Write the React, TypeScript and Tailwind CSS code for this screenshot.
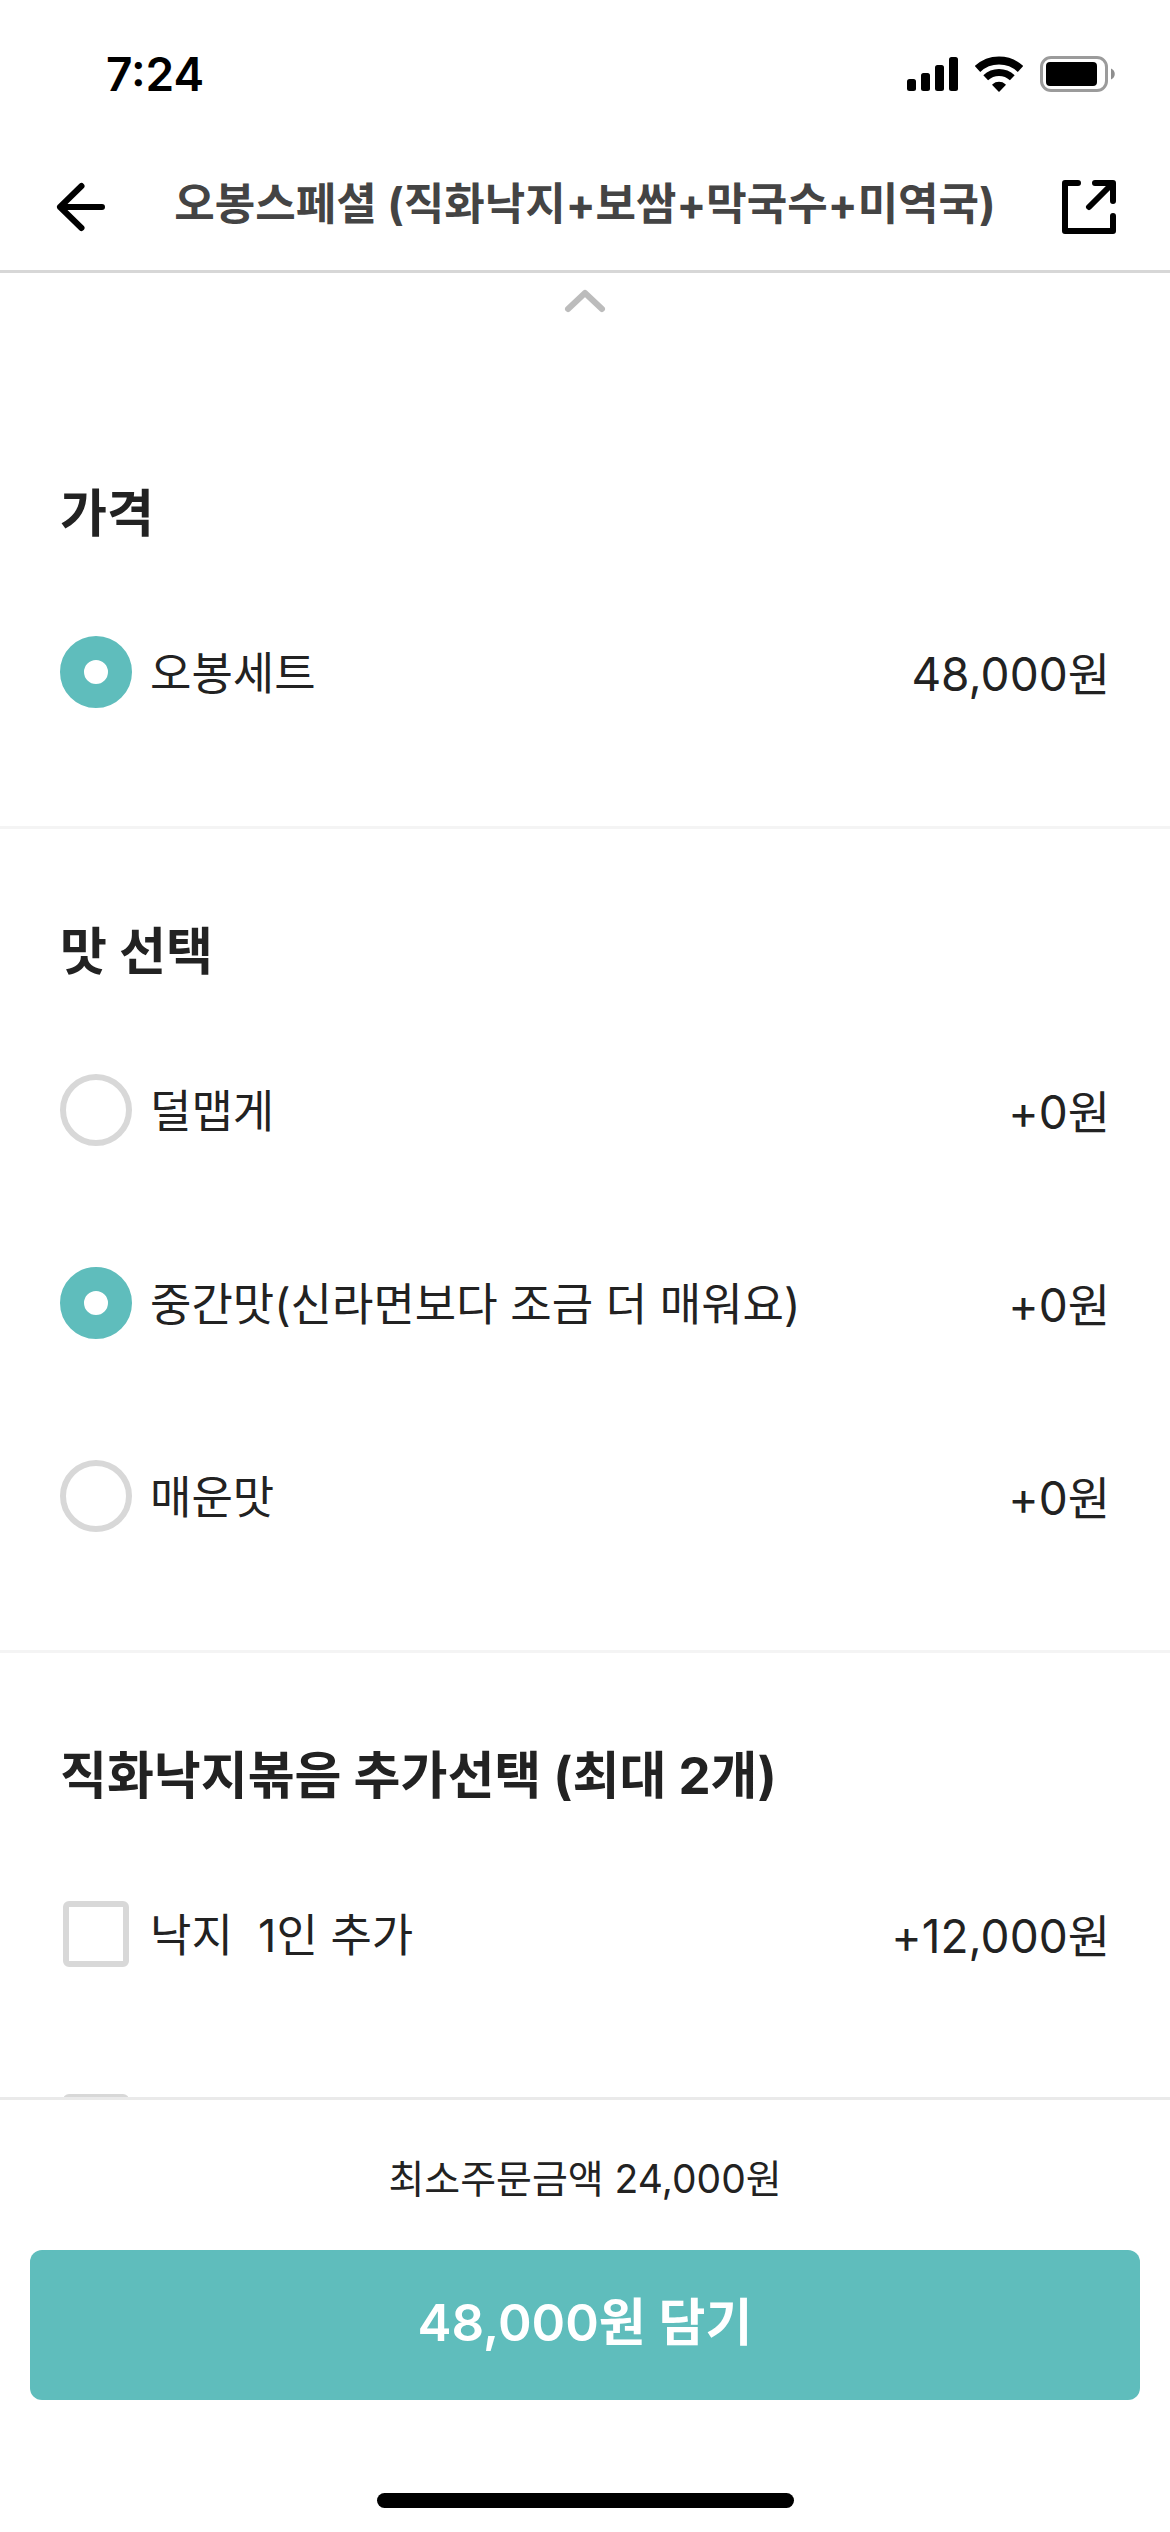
import { useState } from "react";

type Option = {
  id: string;
  name?: string;
  price?: string;
};

const tastes: Option[] = [
  { id: "mild", name: "덜맵게", price: "+0원" },
  { id: "medium", name: "중간맛(신라면보다 조금 더 매워요)", price: "+0원" },
  { id: "hot", name: "매운맛", price: "+0원" },
];

const extras: Option[] = [
  { id: "octopus-1", name: "낙지  1인 추가", price: "+12,000원" },
  { id: "octopus-2" },
];

const StatusBar = () => (
  <div className="flex h-[144px] shrink-0 items-center justify-between pt-1 pr-[54px] pl-[106px] text-black">
    <span className="text-[46px] leading-[60px] font-semibold">7:24</span>
    <div className="flex items-center gap-[17px]">
      <svg width="51" height="36" viewBox="0 0 51 36" fill="currentColor">
        <rect x="0" y="23" width="9" height="12" rx="2.5" />
        <rect x="14" y="17" width="9" height="18" rx="2.5" />
        <rect x="28" y="9" width="9" height="26" rx="2.5" />
        <rect x="42" y="1" width="9" height="34" rx="2.5" />
      </svg>
      <svg width="48" height="36" viewBox="0 0 48 36" fill="none" stroke="currentColor">
        <path d="M2.5 13A31.5 31.5 0 0 1 45.5 13" strokeWidth="8" />
        <path d="M10.7 21.7A19.5 19.5 0 0 1 37.3 21.7" strokeWidth="7" />
        <path d="M24 35L18 28.7A9 9 0 0 1 30 28.7Z" fill="currentColor" strokeWidth="1.5" strokeLinejoin="round" />
      </svg>
      <svg width="76" height="36" viewBox="0 0 76 36">
        <rect x="1.5" y="1.5" width="65" height="33" rx="9.5" fill="none" stroke="#9b9b9b" strokeWidth="3" />
        <rect x="6" y="6" width="51" height="24" rx="4" fill="#000" />
        <path d="M71 12.5C76 14.5 76 21.5 71 23.5Z" fill="#8e8e8e" />
      </svg>
    </div>
  </div>
);

const Header = () => (
  <header className="flex h-[129px] shrink-0 items-center justify-between border-b-[3px] border-[#d7d7d7] px-[54px]">
    <button type="button" aria-label="뒤로" className="text-black">
      <svg width="54" height="54" viewBox="0 0 54 54" fill="none" stroke="currentColor" strokeWidth="6" strokeLinecap="round" strokeLinejoin="round">
        <path d="M48 27H6M27.5 6L6 27L27.5 48" />
      </svg>
    </button>
    <h1 className="pb-[6px] text-[44px] leading-[60px] font-bold text-[#444444]">오봉스페셜 (직화낙지+보쌈+막국수+미역국)</h1>
    <button type="button" aria-label="공유" className="text-black">
      <svg width="54" height="54" viewBox="0 0 54 54" fill="none" stroke="currentColor" strokeWidth="6" strokeLinecap="round" strokeLinejoin="round">
        <path d="M16 3H3V51H51V36" />
        <path d="M33 3H51V21M50 4L27 27" />
      </svg>
    </button>
  </header>
);

const OptionRow = ({
  type,
  group,
  option,
  checked,
  onChange,
}: {
  type: "radio" | "checkbox";
  group: string;
  option: Option;
  checked: boolean;
  onChange: () => void;
}) => (
  <div className="flex h-[72px] items-center gap-[18px] leading-[60px]">
    <input
      id={option.id}
      type={type}
      name={group}
      checked={checked}
      onChange={onChange}
      aria-label={option.name ? undefined : "추가 옵션"}
      className={
        type === "radio"
          ? "size-[72px] shrink-0 appearance-none rounded-full border-[6px] border-[#d8d8d8] bg-white checked:border-[24px] checked:border-[#5fbdbc]"
          : "m-[3px] size-[66px] shrink-0 appearance-none rounded-md border-[6px] border-[#d8d8d8] bg-white checked:border-[#5fbdbc] checked:bg-[#5fbdbc]"
      }
    />
    {option.name && (
      <label htmlFor={option.id} className="flex flex-1 justify-between pt-1 whitespace-pre">
        <span className="text-[45px]">{option.name}</span>
        <span className="text-[46px]">{option.price}</span>
      </label>
    )}
  </div>
);

const Section = ({ title, children }: { title: string; children: React.ReactNode }) => (
  <section className="border-b-[3px] border-[#f4f4f4] px-[60px] pt-[87px] pb-[118px]">
    <h2 className="mb-[86px] text-[51px] leading-[72px] font-bold">{title}</h2>
    <div className="flex flex-col gap-[121px]">{children}</div>
  </section>
);

export default function App() {
  const [taste, setTaste] = useState("medium");
  const [picked, setPicked] = useState<string[]>([]);

  const toggle = (id: string) =>
    setPicked(picked.includes(id) ? picked.filter((p) => p !== id) : [...picked, id]);

  return (
    <div className="flex h-screen flex-col bg-white font-['Inter','Noto_Sans_CJK_KR',sans-serif] text-[#222222]">
      <StatusBar />
      <Header />

      <main className="min-h-0 flex-1 overflow-y-auto [scrollbar-width:none]">
        <div className="flex h-[118px] justify-center pt-4">
          <svg width="42" height="24" viewBox="0 0 42 24" fill="none" stroke="#bcbcbc" strokeWidth="6" strokeLinecap="round" strokeLinejoin="round">
            <path d="M4 20L21 4L38 20" />
          </svg>
        </div>

        <Section title="가격">
          <OptionRow type="radio" group="price" option={{ id: "set", name: "오봉세트", price: "48,000원" }} checked onChange={() => {}} />
        </Section>

        <Section title="맛 선택">
          {tastes.map((t) => (
            <OptionRow key={t.id} type="radio" group="taste" option={t} checked={taste === t.id} onChange={() => setTaste(t.id)} />
          ))}
        </Section>

        <Section title="직화낙지볶음 추가선택 (최대 2개)">
          {extras.map((e) => (
            <OptionRow key={e.id} type="checkbox" group="extra" option={e} checked={picked.includes(e.id)} onChange={() => toggle(e.id)} />
          ))}
        </Section>
      </main>

      <footer className="flex shrink-0 flex-col items-center border-t-[3px] border-[#eaeaea] px-[30px] pt-[49px] pb-6">
        <p className="mb-[41px] text-[39px] leading-[60px]">최소주문금액 24,000원</p>
        <button type="button" className="h-[150px] w-full rounded-xl bg-[#5fbdbc] pb-1 text-[51px] leading-[72px] font-semibold text-white">
          48,000원 담기
        </button>
        <div className="mt-[93px] h-[15px] w-[417px] rounded-full bg-black"></div>
      </footer>
    </div>
  );
}
